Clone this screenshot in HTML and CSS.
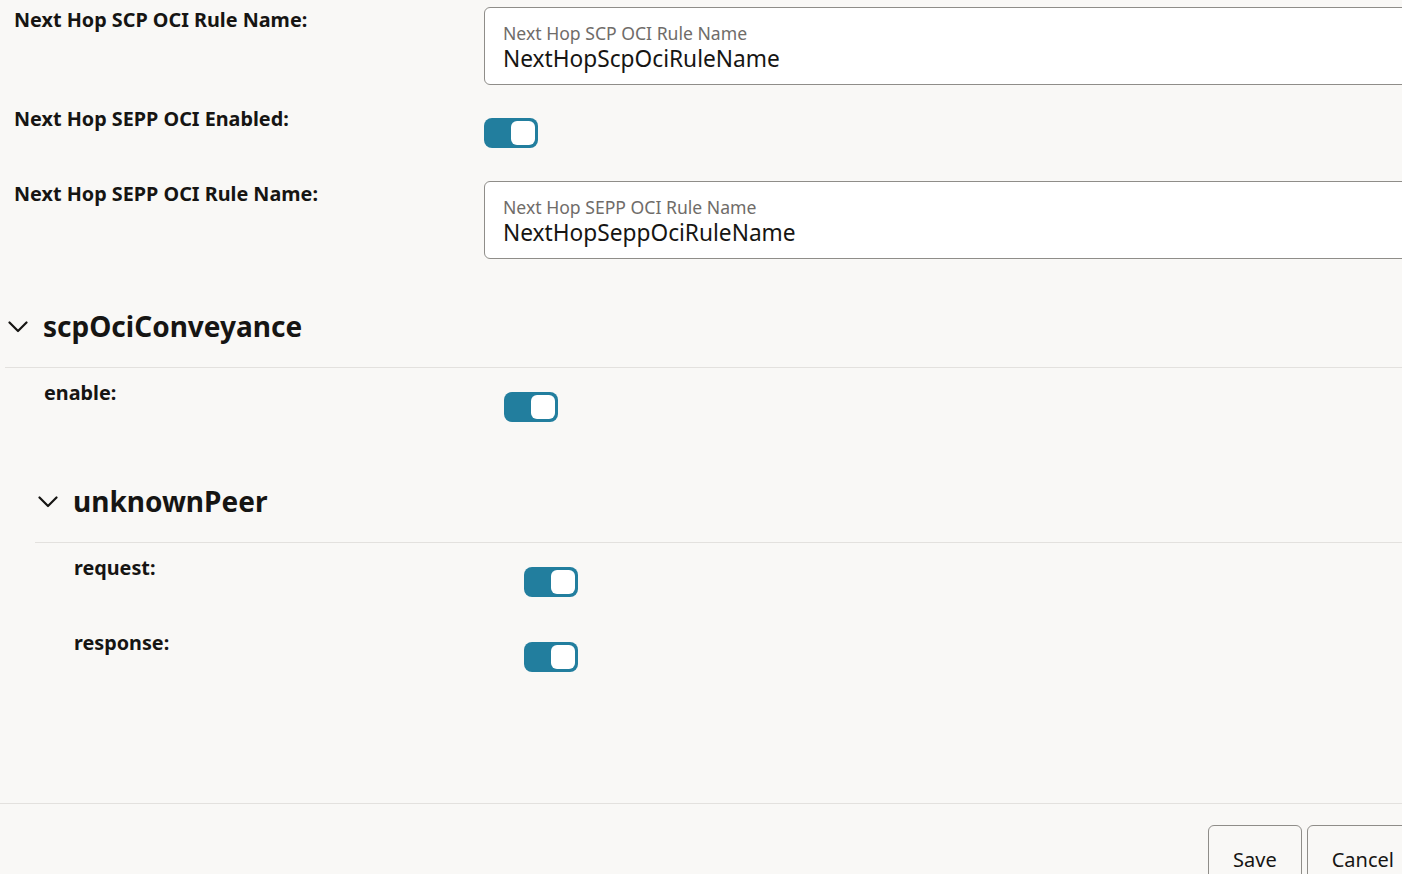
FILE: index.html
```html
<!DOCTYPE html>
<html>
<head>
  <title>OCI Settings</title>
  <link rel="stylesheet" href="styles.css">
</head>
<body>
  <div class="page">
    <div class="form">
      <div class="row">
        <div class="row-label">Next Hop SCP OCI Rule Name:</div>
        <div class="row-value">
          <div class="text-field">
            <span class="field-hint">Next Hop SCP OCI Rule Name</span>
            <span class="field-text">NextHopScpOciRuleName</span>
          </div>
        </div>
      </div>

      <div class="row switch-row">
        <div class="row-label">Next Hop SEPP OCI Enabled:</div>
        <div class="row-value">
          <span class="switch on"><span class="knob"></span></span>
        </div>
      </div>

      <div class="row">
        <div class="row-label">Next Hop SEPP OCI Rule Name:</div>
        <div class="row-value">
          <div class="text-field">
            <span class="field-hint">Next Hop SEPP OCI Rule Name</span>
            <span class="field-text">NextHopSeppOciRuleName</span>
          </div>
        </div>
      </div>

      <div class="section">
        <div class="section-header">
          <svg class="chevron" width="20" height="12" viewBox="0 0 20 12"><polyline points="1.5,1.5 10,10 18.5,1.5" fill="none" stroke="#161513" stroke-width="2.2" stroke-linecap="round" stroke-linejoin="round"/></svg>
          <h2 class="section-title">scpOciConveyance</h2>
        </div>
        <div class="section-body">
          <div class="row switch-row">
            <div class="row-label">enable:</div>
            <div class="row-value">
              <span class="switch on"><span class="knob"></span></span>
            </div>
          </div>

          <div class="section">
            <div class="section-header">
              <svg class="chevron" width="20" height="12" viewBox="0 0 20 12"><polyline points="1.5,1.5 10,10 18.5,1.5" fill="none" stroke="#161513" stroke-width="2.2" stroke-linecap="round" stroke-linejoin="round"/></svg>
              <h2 class="section-title">unknownPeer</h2>
            </div>
            <div class="section-body">
              <div class="row switch-row">
                <div class="row-label">request:</div>
                <div class="row-value">
                  <span class="switch on"><span class="knob"></span></span>
                </div>
              </div>
              <div class="row switch-row">
                <div class="row-label">response:</div>
                <div class="row-value">
                  <span class="switch on"><span class="knob"></span></span>
                </div>
              </div>
            </div>
          </div>
        </div>
      </div>
    </div>

    <div class="footer">
      <button class="btn">Save</button>
      <button class="btn">Cancel</button>
    </div>
  </div>
</body>
</html>
```

FILE: styles.css
```css
body {
  margin: 0;
  padding: 0;
  background-color: #f9f8f6;
  color: #161513;
  font-family: "Noto Sans", Arial, sans-serif;
  overflow: hidden;
}

.page {
  width: 1442px;
}

.form {
  width: 1437px;
  margin-left: 5px;
  padding-top: 7px;
  height: 803px;
  box-sizing: border-box;
}

.row {
  display: flex;
  margin-bottom: 21px;
}

.row-label {
  flex: 0 0 33.333%;
  box-sizing: border-box;
  padding-left: 9px;
  font-size: 19.8px;
  font-weight: bold;
  line-height: 25px;
}

.row-value {
  flex: 1;
}

.switch-row .row-value {
  padding: 12px 0;
}

.text-field {
  display: flex;
  flex-direction: column;
  height: 78px;
  box-sizing: border-box;
  padding: 14px 18px 0;
  background-color: #fff;
  border: 1px solid #8f8d89;
  border-radius: 6px;
}

.field-hint {
  font-size: 17.6px;
  line-height: 22px;
  color: #6f6c69;
}

.field-text {
  font-size: 22.7px;
  line-height: 30px;
}

.switch {
  display: flex;
  justify-content: flex-end;
  width: 54px;
  height: 30px;
  box-sizing: border-box;
  padding: 3px;
  border-radius: 8px;
  background-color: #227e9e;
}

.knob {
  width: 24px;
  height: 24px;
  border-radius: 6px;
  background-color: #fff;
}

.section-header {
  display: flex;
  align-items: flex-end;
  height: 87px;
  border-bottom: 1px solid #e3e1de;
}

.chevron {
  margin: 0 15px 34px 3px;
}

.section-title {
  margin: 0 0 22px;
  font-size: 28px;
  line-height: 38px;
  font-weight: bold;
}

.section-body {
  padding-left: 30px;
  padding-top: 12px;
}

.footer {
  display: flex;
  justify-content: flex-end;
  gap: 5px;
  padding-top: 21px;
  padding-right: 23px;
  border-top: 1px solid #e3e1de;
}

.btn {
  height: 60px;
  padding: 8px 24px 0;
  border: 1px solid #8f8d89;
  border-radius: 6px;
  background-color: #f9f8f6;
  color: #161513;
  font-family: "Noto Sans", Arial, sans-serif;
  font-size: 20px;
}
```
